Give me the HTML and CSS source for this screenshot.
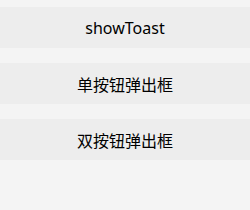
FILE: index.html
```html
<!DOCTYPE html>
<html>
<head>
<meta charset="utf-8">
<link rel="stylesheet" href="styles.css">
</head>
<body>
<div class="list">
  <div class="btn">showToast</div>
  <div class="btn">单按钮弹出框</div>
  <div class="btn">双按钮弹出框</div>
</div>
</body>
</html>
```
FILE: styles.css
```css
html, body {
  margin: 0;
  padding: 0;
  background: #f4f4f4;
  height: 100%;
}
.list {
  display: flex;
  flex-direction: column;
  gap: 15px;
  padding-top: 7px;
}
.btn {
  height: 41px;
  background: #ededed;
  display: flex;
  align-items: center;
  justify-content: center;
  font-family: "Noto Sans", "Noto Sans CJK SC", sans-serif;
  font-size: 16px;
  color: #000;
}
```
